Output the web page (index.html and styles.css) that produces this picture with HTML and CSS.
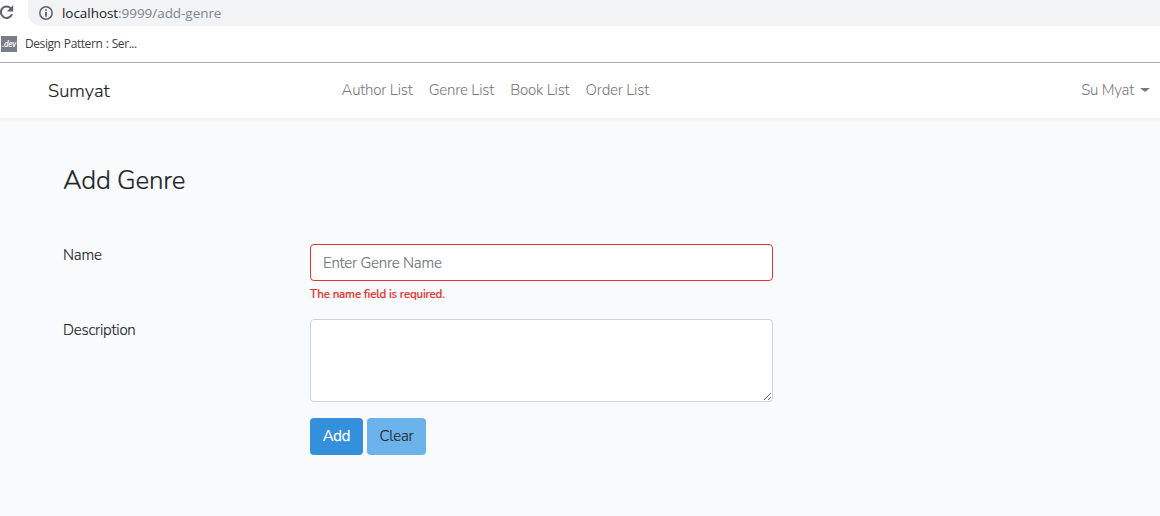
FILE: index.html
```html
<!DOCTYPE html>
<html lang="en">
<head>
<meta charset="utf-8">
<title>Add Genre</title>
<link rel="stylesheet" href="styles.css">
</head>
<body>
<header class="browser">
  <div class="toolbar">
    <svg class="reload" width="16" height="24" viewBox="0 0 16 24" fill="none"><path d="M10.6 8.2A5.7 5.7 0 1 0 12 14" stroke="#5f6368" stroke-width="2"/><path d="M13.2 5V11.4H6.8Z" fill="#5f6368"/></svg>
    <div class="address">
      <svg class="info" width="14" height="14" viewBox="0 0 14 14"><circle cx="7" cy="7" r="6.2" fill="none" stroke="#5f6368" stroke-width="1.5"/><path d="M6.1 3.2h1.8v1.6H6.1zM6.1 6h1.8v4.8H6.1z" fill="#5f6368"/></svg>
      <span class="url"><span class="host">localhost</span>:9999/add-genre</span>
    </div>
  </div>
  <div class="bookmarks"><span class="favicon">.dev</span><span class="bookmark">Design Pattern : Ser...</span></div>
</header>
<nav class="navbar">
  <a class="brand">Sumyat</a>
  <div class="links"><a>Author List</a><a>Genre List</a><a>Book List</a><a>Order List</a></div>
  <a class="user">Su Myat<span class="caret"></span></a>
</nav>
<main class="content">
  <h1 class="title">Add Genre</h1>
  <form class="form">
    <label class="label" for="name">Name</label>
    <div class="field">
      <input class="control invalid" id="name" placeholder="Enter Genre Name">
      <strong class="error">The name field is required.</strong>
    </div>
    <label class="label" for="description">Description</label>
    <div class="field"><textarea class="control area" id="description"></textarea></div>
    <div class="actions"><button class="button add" type="button">Add</button><button class="button clear" type="button">Clear</button></div>
  </form>
</main>
</body>
</html>
```
FILE: styles.css
```css
* { box-sizing: border-box; }
body { margin: 0; height: 516px; overflow: hidden; background: #f8fafc; color: #212529; font: 300 15px/23px Nunito, Lato, sans-serif; letter-spacing: -0.22px; }
.browser { height: 63px; background: #fff; border-bottom: 1px solid #adadad; }
.toolbar { display: flex; height: 26px; }
.reload { width: 16px; height: 24px; flex: none; }
.address { flex: 1; display: flex; align-items: center; height: 26px; margin-left: 12px; padding: 0 0 1px 11px; border-radius: 0 0 0 13px; background: #f1f3f4; }
.info { margin-right: 9px; }
.url { font: 13.5px/20px "Open Sans", sans-serif; letter-spacing: -0.05px; color: #80868b; }
.host { color: #202124; }
.bookmarks { display: flex; align-items: center; height: 36px; padding-left: 1px; }
.favicon { width: 16px; height: 16px; margin-right: 8px; background: #797d87; color: #fff; font: italic 600 8px/15px "Open Sans", sans-serif; letter-spacing: -0.4px; text-align: center; }
.bookmark { color: #3c4043; font: 12px/16px "Open Sans", sans-serif; letter-spacing: -0.42px; word-spacing: 0.6px; }
.navbar { display: flex; align-items: center; height: 55px; padding: 0 10px 1px 48px; background: #fff; box-shadow: 0 2px 4px rgba(0, 0, 0, .04); }
.brand { width: 293.5px; color: #212529; font-size: 18.4px; letter-spacing: 0; -webkit-text-stroke: .15px; }
.links { display: flex; gap: 16.2px; color: #777; letter-spacing: -0.2px; }
.user { display: flex; align-items: center; margin-left: auto; color: #777; letter-spacing: -0.2px; }
.caret { margin-left: 6px; border: 5px solid transparent; border-width: 4.5px 5px 0; border-top-color: #777; }
.content { padding: 47px 63px 0; }
.title { margin: 0 0 47px; font-size: 25.9px; line-height: 32px; font-weight: 300; -webkit-text-stroke: .2px; }
.form { display: grid; grid-template-columns: 247px 463px; align-items: start; -webkit-text-stroke: .15px; }
.label { line-height: 22px; }
.field { display: flex; flex-direction: column; }
.control { width: 463px; height: 37px; padding: 6px 12px; border: 1px solid #ced4da; border-radius: 4px; background: #fff; color: #495057; font: inherit; letter-spacing: inherit; outline: 0; }
.control::placeholder { color: #6c757d; opacity: 1; }
.invalid { border-color: #e3342f; }
.error { height: 38px; padding-top: 4px; color: #e3342f; font-size: 11.5px; line-height: 19px; font-weight: 600; letter-spacing: -0.17px; }
.area { height: 83px; resize: vertical; }
.actions { grid-column: 2; display: flex; gap: 4px; margin-top: 16px; }
.button { height: 37px; padding: 0 0 1px; border: 0; border-radius: 4px; font: inherit; letter-spacing: inherit; }
.add { width: 53px; background: #3490dc; color: #fff; -webkit-text-stroke: .4px; }
.clear { width: 59px; background: #6cb2eb; color: #212529; }
```
